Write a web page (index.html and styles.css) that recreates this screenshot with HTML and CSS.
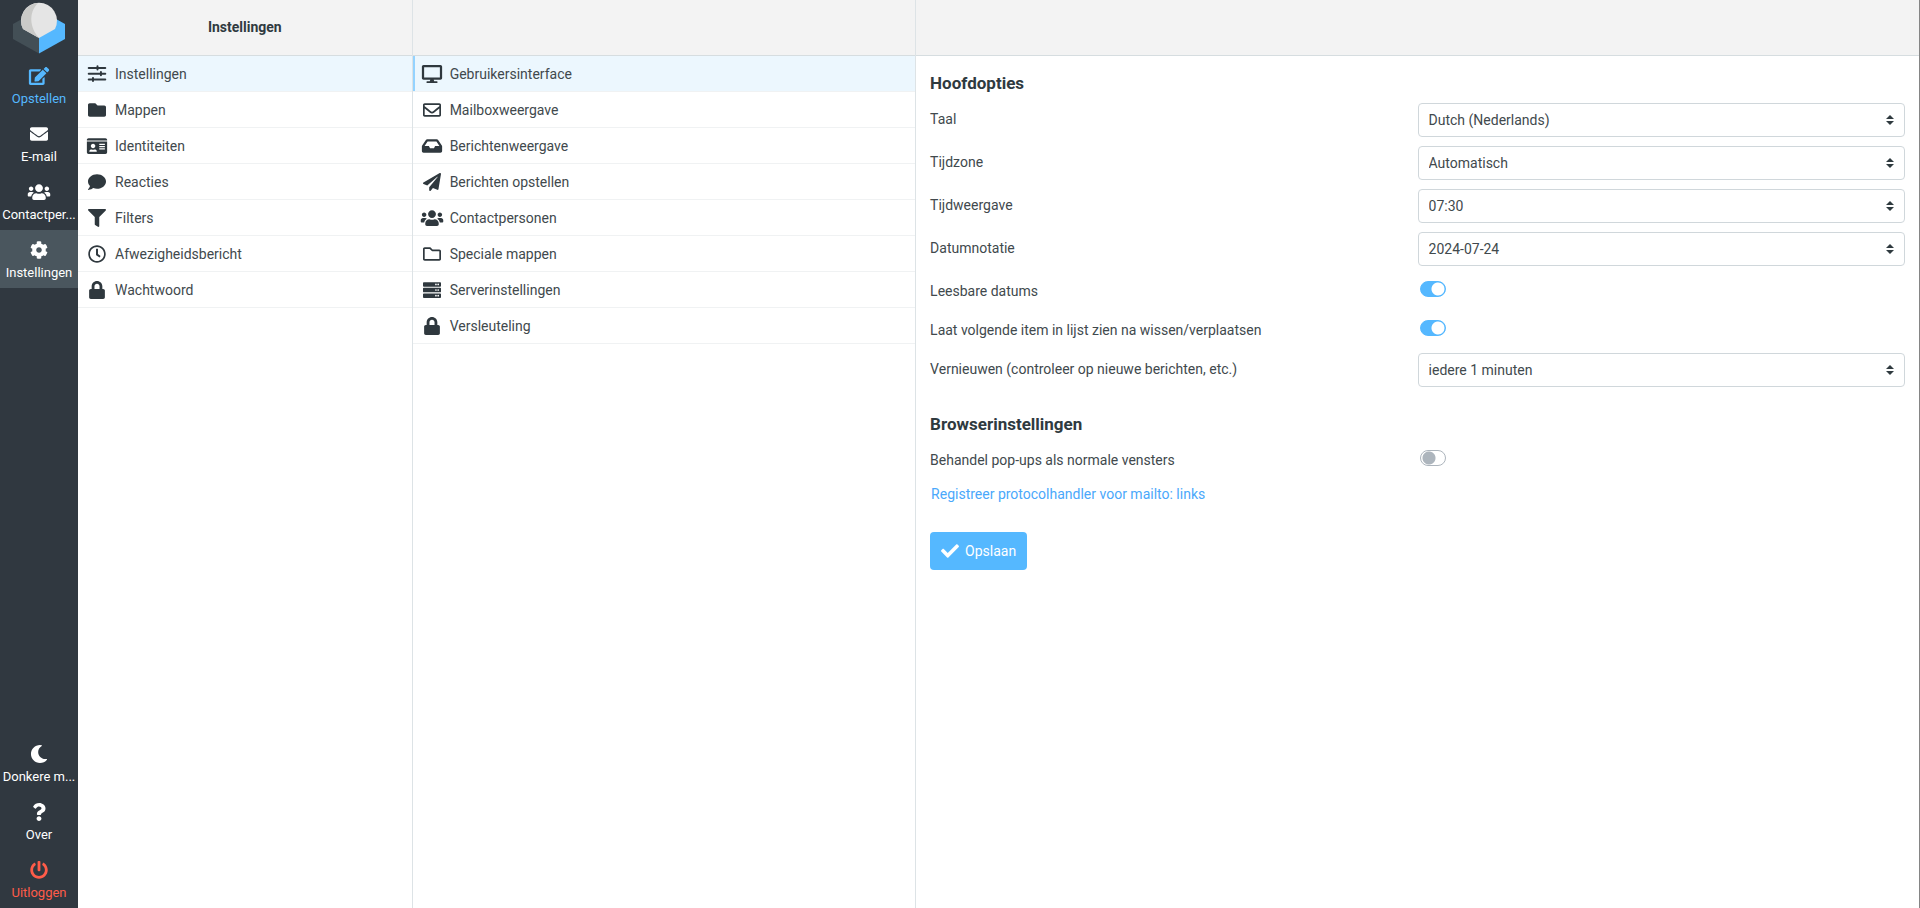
FILE: index.html
```html
<!DOCTYPE html>
<html lang="nl">
<head>
<meta charset="utf-8">
<title>Instellingen</title>
<link rel="stylesheet" href="styles.css">
</head>
<body>
<svg class="sprite" aria-hidden="true">
  <symbol id="edit" viewBox="0 0 576 512"><path d="M402.6 83.2l90.2 90.2c3.8 3.8 3.8 10 0 13.8L274.4 405.6l-92.8 10.3c-12.4 1.4-22.9-9.1-21.5-21.5l10.3-92.8L388.8 83.2c3.8-3.8 10-3.8 13.8 0zm162-22.9l-48.8-48.8c-15.2-15.2-39.9-15.2-55.2 0l-35.4 35.4c-3.8 3.8-3.8 10 0 13.8l90.2 90.2c3.8 3.8 10 3.8 13.8 0l35.4-35.4c15.2-15.3 15.2-40 0-55.2zM384 346.2V448H64V128h229.8c3.2 0 6.2-1.3 8.5-3.5l40-40c7.6-7.6 2.2-20.5-8.5-20.5H48C21.5 64 0 85.5 0 112v352c0 26.5 21.5 48 48 48h352c26.5 0 48-21.5 48-48V306.2c0-10.7-12.9-16-20.5-8.5l-40 40c-2.2 2.3-3.5 5.3-3.5 8.5z"/></symbol>
  <symbol id="envelope" viewBox="0 0 512 512"><path d="M502.3 190.8c3.9-3.1 9.7-.2 9.7 4.7V400c0 26.5-21.5 48-48 48H48c-26.5 0-48-21.5-48-48V195.6c0-5 5.7-7.8 9.7-4.7 22.4 17.4 52.1 39.5 154.1 113.6 21.1 15.4 56.7 47.8 92.2 47.6 35.7.3 72-32.8 92.3-47.6 102-74.1 131.6-96.3 154-113.7zM256 320c23.2.4 56.6-29.2 73.4-41.4 132.7-96.3 142.8-104.7 173.4-128.7 5.8-4.5 9.2-11.5 9.2-18.9v-19c0-26.5-21.5-48-48-48H48c-26.5 0-48 21.5-48 48v19c0 7.4 3.4 14.3 9.2 18.9 30.6 23.9 40.7 32.4 173.4 128.7 16.8 12.2 50.2 41.8 73.4 41.4z"/></symbol>
  <symbol id="users" viewBox="0 0 640 512"><path d="M96 224c35.3 0 64-28.7 64-64s-28.7-64-64-64-64 28.7-64 64 28.7 64 64 64zm448 0c35.3 0 64-28.7 64-64s-28.7-64-64-64-64 28.7-64 64 28.7 64 64 64zm32 32h-64c-17.6 0-33.5 7.1-45.1 18.6 40.3 22.1 68.9 62 75.1 109.4h66c17.7 0 32-14.3 32-32v-32c0-35.3-28.7-64-64-64zm-256 0c61.9 0 112-50.1 112-112S381.9 32 320 32 208 82.1 208 144s50.1 112 112 112zm76.8 32h-8.3c-20.8 10-43.9 16-68.5 16s-47.6-6-68.5-16h-8.3C179.6 288 128 339.6 128 403.2V432c0 26.5 21.5 48 48 48h288c26.5 0 48-21.5 48-48v-28.8c0-63.6-51.6-115.2-115.2-115.2zm-223.7-13.4C161.5 263.1 145.6 256 128 256H64c-35.3 0-64 28.7-64 64v32c0 17.7 14.3 32 32 32h65.9c6.3-47.4 34.9-87.3 75.2-109.4z"/></symbol>
  <symbol id="cog" viewBox="0 0 512 512"><path d="M487.4 315.7l-42.6-24.6c4.3-23.2 4.3-47 0-70.2l42.6-24.6c4.9-2.8 7.1-8.6 5.5-14-11.1-35.6-30-67.8-54.7-94.6-3.8-4.1-10-5.1-14.8-2.3L380.8 110c-17.9-15.4-38.5-27.3-60.8-35.1V25.8c0-5.6-3.9-10.5-9.4-11.7-36.7-8.2-74.3-7.8-109.2 0-5.5 1.2-9.4 6.1-9.4 11.7V75c-22.2 7.9-42.8 19.8-60.8 35.1L88.7 85.5c-4.9-2.8-11-1.9-14.8 2.3-24.7 26.7-43.6 58.9-54.7 94.6-1.7 5.4.6 11.2 5.5 14L67.3 221c-4.3 23.2-4.3 47 0 70.2l-42.6 24.6c-4.9 2.8-7.1 8.6-5.5 14 11.1 35.6 30 67.8 54.7 94.6 3.8 4.1 10 5.1 14.8 2.3l42.6-24.6c17.9 15.4 38.5 27.3 60.8 35.1v49.2c0 5.6 3.9 10.5 9.4 11.7 36.7 8.2 74.3 7.8 109.2 0 5.5-1.2 9.4-6.1 9.4-11.7v-49.2c22.2-7.9 42.8-19.8 60.8-35.1l42.6 24.6c4.9 2.8 11 1.9 14.8-2.3 24.7-26.7 43.6-58.9 54.7-94.6 1.5-5.5-.7-11.3-5.6-14.1zM256 336c-44.1 0-80-35.9-80-80s35.9-80 80-80 80 35.9 80 80-35.9 80-80 80z"/></symbol>
  <symbol id="moon" viewBox="0 0 512 512"><path d="M283.211 512c78.962 0 151.079-35.925 198.857-94.792 7.068-8.708-.639-21.43-11.562-19.35-124.203 23.654-238.262-71.576-238.262-196.954 0-72.222 38.662-138.635 101.498-174.394 9.686-5.512 7.25-20.197-3.756-22.23A258.156 258.156 0 0 0 283.211 0c-141.309 0-256 114.511-256 256 0 141.309 114.511 256 256 256z"/></symbol>
  <symbol id="question" viewBox="0 0 384 512"><path d="M202.021 0C122.202 0 70.503 32.703 29.914 91.026c-7.363 10.58-5.093 25.086 5.178 32.874l43.138 32.709c10.373 7.865 25.132 6.026 33.253-4.148 25.049-31.381 43.63-49.449 82.757-49.449 30.764 0 68.816 19.799 68.816 49.631 0 22.552-18.617 34.134-48.993 51.164-35.423 19.86-82.299 44.576-82.299 106.405V320c0 13.255 10.745 24 24 24h72.471c13.255 0 24-10.745 24-24v-5.773c0-42.86 125.268-44.645 125.268-160.627C377.504 66.256 286.902 0 202.021 0zM192 373.459c-38.196 0-69.271 31.075-69.271 69.271 0 38.195 31.075 69.27 69.271 69.27s69.271-31.075 69.271-69.271-31.075-69.27-69.271-69.27z"/></symbol>
  <symbol id="power" viewBox="0 0 512 512"><path d="M400 54.1c63 45 104 118.6 104 201.9 0 136.8-110.8 247.7-247.5 248C120 504.3 8.2 393 8 256.4 7.9 173.1 48.9 99.3 111.8 54.2c11.7-8.3 28-4.8 35 7.7L162.6 90c5.9 10.5 3.1 23.8-6.6 31-41.5 30.8-68 79.6-68 134.9-.1 92.3 74.5 168.1 168 168.1 91.6 0 168.6-74.2 168-169.1-.3-51.8-24.7-101.8-68.1-134-9.7-7.2-12.4-20.5-6.5-30.9l15.8-28.1c7-12.4 23.2-16.1 34.8-7.8zM296 264V24c0-13.3-10.7-24-24-24h-32c-13.3 0-24 10.7-24 24v240c0 13.3 10.7 24 24 24h32c13.3 0 24-10.7 24-24z"/></symbol>
  <symbol id="sliders" viewBox="0 0 512 512"><path d="M22 54h220V38a28 28 0 0 1 56 0v16h192a30 30 0 0 1 0 60H298v16a28 28 0 0 1-56 0v-16H22a30 30 0 0 1 0-60zM22 218h318v-16a28 28 0 0 1 56 0v16h94a30 30 0 0 1 0 60h-94v16a28 28 0 0 1-56 0v-16H22a30 30 0 0 1 0-60zM22 382h92v-16a28 28 0 0 1 56 0v16h320a30 30 0 0 1 0 60H170v16a28 28 0 0 1-56 0v-16H22a30 30 0 0 1 0-60z"/></symbol>
  <symbol id="folder" viewBox="0 0 512 512"><path d="M464 128H272l-64-64H48C21.49 64 0 85.49 0 112v288c0 26.51 21.49 48 48 48h416c26.51 0 48-21.49 48-48V176c0-26.51-21.49-48-48-48z"/></symbol>
  <symbol id="idcard" viewBox="0 0 576 512"><path fill-rule="evenodd" d="M528 32H48C21.5 32 0 53.5 0 80v16h576V80c0-26.5-21.5-48-48-48zM0 432c0 26.5 21.5 48 48 48h480c26.5 0 48-21.5 48-48V128H0v304zM352 192h160v32H352zM352 256h160v32H352zM352 320h160v32H352zM176 192c35.3 0 64 28.7 64 64s-28.7 64-64 64-64-28.700-64-64 28.700-64 64-64zM67.1 396.2C75.5 370.5 99.6 352 128 352h8.2c12.3 5.1 25.7 8 39.8 8s27.6-2.9 39.8-8h8.2c28.400 0 52.5 18.5 60.9 44.2 3.2 9.9-5.2 19.8-15.6 19.8H82.7c-10.4 0-18.8-10-15.6-19.8z"/></symbol>
  <symbol id="comment" viewBox="0 0 512 512"><path d="M256 32C114.6 32 0 125.1 0 240c0 49.6 21.4 95 57 130.7C44.5 421.1 2.7 466 2.2 466.5c-2.2 2.3-2.8 5.7-1.5 8.7S4.8 480 8 480c66.3 0 116-31.8 140.6-51.4 32.7 12.3 69 19.4 107.4 19.4 141.4 0 256-93.1 256-208S397.4 32 256 32z"/></symbol>
  <symbol id="filter" viewBox="0 0 512 512"><path d="M487.976 0H24.028C2.71 0-8.047 25.866 7.058 40.971L192 225.941V432c0 7.831 3.821 15.17 10.237 19.662l80 55.98C298.02 518.69 320 507.493 320 487.98V225.941l184.947-184.97C520.021 25.896 509.338 0 487.976 0z"/></symbol>
  <symbol id="clock" viewBox="0 0 512 512"><path d="M256 8C119 8 8 119 8 256s111 248 248 248 248-111 248-248S393 8 256 8zm0 448c-110.5 0-200-89.5-200-200S145.5 56 256 56s200 89.5 200 200-89.5 200-200 200zm61.8-104.4l-84.9-61.7c-3.1-2.3-4.9-5.9-4.9-9.7V116c0-6.6 5.4-12 12-12h32c6.6 0 12 5.4 12 12v141.7l66.8 48.6c5.4 3.9 6.5 11.4 2.6 16.8L334.6 349c-3.9 5.3-11.4 6.5-16.8 2.6z"/></symbol>
  <symbol id="lock" viewBox="0 0 448 512"><path d="M400 224h-24v-72C376 68.2 307.8 0 224 0S72 68.2 72 152v72H48c-26.5 0-48 21.5-48 48v192c0 26.5 21.5 48 48 48h352c26.5 0 48-21.5 48-48V272c0-26.5-21.5-48-48-48zm-104 0H152v-72c0-39.7 32.3-72 72-72s72 32.3 72 72v72z"/></symbol>
  <symbol id="desktop" viewBox="0 0 576 512"><path d="M528 0H48C21.5 0 0 21.5 0 48v320c0 26.5 21.5 48 48 48h192l-16 48h-72c-13.3 0-24 10.7-24 24s10.7 24 24 24h272c13.3 0 24-10.7 24-24s-10.7-24-24-24h-72l-16-48h192c26.5 0 48-21.5 48-48V48c0-26.5-21.5-48-48-48zm-16 352H64V64h448v288z"/></symbol>
  <symbol id="envelope-o" viewBox="0 0 512 512"><path d="M464 64H48C21.49 64 0 85.49 0 112v288c0 26.51 21.49 48 48 48h416c26.51 0 48-21.49 48-48V112c0-26.51-21.49-48-48-48zm0 48v40.805c-22.422 18.259-58.168 46.651-134.587 106.49-16.841 13.247-50.201 45.072-73.413 44.701-23.208.375-56.579-31.459-73.413-44.701C106.18 199.465 70.425 171.067 48 152.805V112h416zM48 400V214.398c22.914 18.251 55.409 43.862 104.938 82.646 21.857 17.205 60.134 55.186 103.062 54.955 42.717.231 80.509-37.199 103.053-54.947 49.528-38.783 82.032-64.401 104.947-82.653V400H48z"/></symbol>
  <symbol id="inbox" viewBox="0 0 576 512"><path d="M567.938 243.908L462.25 85.374A48.003 48.003 0 0 0 422.311 64H153.689a48 48 0 0 0-39.938 21.374L8.062 243.908A47.994 47.994 0 0 0 0 270.533V400c0 26.51 21.49 48 48 48h480c26.51 0 48-21.49 48-48V270.533a47.994 47.994 0 0 0-8.062-26.625zM162.252 128h251.497l85.333 128H376l-32 64H232l-32-64H76.918l85.334-128z"/></symbol>
  <symbol id="plane" viewBox="0 0 512 512"><path d="M476 3.2L12.5 270.6c-18.1 10.4-15.8 35.6 2.2 43.2L121 358.4l287.3-253.2c5.5-4.9 13.3 2.6 8.6 8.3L176 407v80.5c0 23.6 28.5 32.9 42.5 15.8L282 426l124.6 52.2c14.2 6 30.4-2.9 33-18.2l72-432C515 7.8 493.3-6.8 476 3.2z"/></symbol>
  <symbol id="folder-o" viewBox="0 0 512 512"><path d="M464 128H272l-54.63-54.63c-6-6-14.14-9.37-22.63-9.37H48C21.49 64 0 85.49 0 112v288c0 26.51 21.49 48 48 48h416c26.51 0 48-21.49 48-48V176c0-26.51-21.49-48-48-48zm0 272H48V112h140.12l54.63 54.63c6 6 14.14 9.37 22.63 9.37H464v224z"/></symbol>
  <symbol id="server" viewBox="0 0 512 512"><path fill-rule="evenodd" d="M24 32h464a24 24 0 0 1 24 24v80a24 24 0 0 1-24 24H24a24 24 0 0 1-24-24V56a24 24 0 0 1 24-24zm0 160h464a24 24 0 0 1 24 24v80a24 24 0 0 1-24 24H24a24 24 0 0 1-24-24v-80a24 24 0 0 1 24-24zm0 160h464a24 24 0 0 1 24 24v80a24 24 0 0 1-24 24H24a24 24 0 0 1-24-24v-80a24 24 0 0 1 24-24zM368 72a24 24 0 1 0 0 48 24 24 0 0 0 0-48zm64 0a24 24 0 1 0 0 48 24 24 0 0 0 0-48zM368 232a24 24 0 1 0 0 48 24 24 0 0 0 0-48zm64 0a24 24 0 1 0 0 48 24 24 0 0 0 0-48zM368 392a24 24 0 1 0 0 48 24 24 0 0 0 0-48zm64 0a24 24 0 1 0 0 48 24 24 0 0 0 0-48z"/></symbol>
  <symbol id="check" viewBox="0 0 512 512"><path d="M173.898 439.404l-166.4-166.4c-9.997-9.997-9.997-26.206 0-36.204l36.203-36.204c9.997-9.998 26.207-9.998 36.204 0L192 312.69 432.095 72.596c9.997-9.997 26.207-9.997 36.204 0l36.203 36.204c9.997 9.997 9.997 26.206 0 36.204l-294.4 294.401c-9.998 9.997-26.207 9.997-36.204-.001z"/></symbol>
</svg>
<div class="layout">
  <nav class="taskbar">
    <svg class="logo" viewBox="0 0 78 56" role="img" aria-label="Logo">
      <path fill="#434f56" d="M13 24l9-5 17 10v24.500L13 39z"/>
      <path fill="#55b8ff" d="M65 24l-9-5-17 10v24.500L65 39z"/>
      <path fill="#e5e5e5" d="M39 38l-16-9a18 18 0 1 1 32 0z"/>
      <path fill="#cacac8" d="M38 3a18 18 0 0 0-15 26l16 9c-9-10-11-25-1-35z"/>
    </svg>
    <a class="task compose" href="#"><svg class="icon"><use href="#edit"/></svg><span>Opstellen</span></a>
    <a class="task" href="#"><svg class="icon"><use href="#envelope"/></svg><span>E-mail</span></a>
    <a class="task" href="#"><svg class="icon"><use href="#users"/></svg><span>Contactper...</span></a>
    <a class="task selected" href="#"><svg class="icon"><use href="#cog"/></svg><span>Instellingen</span></a>
    <div class="spacer"></div>
    <a class="task" href="#"><svg class="icon"><use href="#moon"/></svg><span>Donkere m...</span></a>
    <a class="task" href="#"><svg class="icon"><use href="#question"/></svg><span>Over</span></a>
    <a class="task logout" href="#"><svg class="icon"><use href="#power"/></svg><span>Uitloggen</span></a>
  </nav>
  <section class="column menu">
    <header class="header">Instellingen</header>
    <ul class="list">
      <li class="selected"><a href="#"><svg class="icon"><use href="#sliders"/></svg>Instellingen</a></li>
      <li><a href="#"><svg class="icon"><use href="#folder"/></svg>Mappen</a></li>
      <li><a href="#"><svg class="icon"><use href="#idcard"/></svg>Identiteiten</a></li>
      <li><a href="#"><svg class="icon"><use href="#comment"/></svg>Reacties</a></li>
      <li><a href="#"><svg class="icon"><use href="#filter"/></svg>Filters</a></li>
      <li><a href="#"><svg class="icon"><use href="#clock"/></svg>Afwezigheidsbericht</a></li>
      <li><a href="#"><svg class="icon"><use href="#lock"/></svg>Wachtwoord</a></li>
    </ul>
  </section>
  <section class="column sections">
    <header class="header"></header>
    <ul class="list">
      <li class="selected focused"><a href="#"><svg class="icon"><use href="#desktop"/></svg>Gebruikersinterface</a></li>
      <li><a href="#"><svg class="icon"><use href="#envelope-o"/></svg>Mailboxweergave</a></li>
      <li><a href="#"><svg class="icon"><use href="#inbox"/></svg>Berichtenweergave</a></li>
      <li><a href="#"><svg class="icon"><use href="#plane"/></svg>Berichten opstellen</a></li>
      <li><a href="#"><svg class="icon"><use href="#users"/></svg>Contactpersonen</a></li>
      <li><a href="#"><svg class="icon"><use href="#folder-o"/></svg>Speciale mappen</a></li>
      <li><a href="#"><svg class="icon"><use href="#server"/></svg>Serverinstellingen</a></li>
      <li><a href="#"><svg class="icon"><use href="#lock"/></svg>Versleuteling</a></li>
    </ul>
  </section>
  <main class="column content">
    <header class="header"></header>
    <form class="form">
      <fieldset>
        <legend>Hoofdopties</legend>
        <div class="row"><label for="lang">Taal</label><select id="lang"><option>Dutch (Nederlands)</option></select></div>
        <div class="row"><label for="zone">Tijdzone</label><select id="zone"><option>Automatisch</option></select></div>
        <div class="row"><label for="time">Tijdweergave</label><select id="time"><option>07:30</option></select></div>
        <div class="row"><label for="date">Datumnotatie</label><select id="date"><option>2024-07-24</option></select></div>
        <div class="row switch"><label for="pretty">Leesbare datums</label><input type="checkbox" id="pretty" checked></div>
        <div class="row switch"><label for="next">Laat volgende item in lijst zien na wissen/verplaatsen</label><input type="checkbox" id="next" checked></div>
        <div class="row"><label for="refresh">Vernieuwen (controleer op nieuwe berichten, etc.)</label><select id="refresh"><option>iedere 1 minuten</option></select></div>
      </fieldset>
      <fieldset>
        <legend>Browserinstellingen</legend>
        <div class="row switch"><label for="popups">Behandel pop-ups als normale vensters</label><input type="checkbox" id="popups"></div>
        <a class="link" href="#">Registreer protocolhandler voor mailto: links</a>
      </fieldset>
      <button class="save" type="button"><svg class="icon"><use href="#check"/></svg>Opslaan</button>
    </form>
  </main>
</div>
</body>
</html>
```
FILE: styles.css
```css
* { box-sizing: border-box; }
body {
  margin: 0;
  font: 14px/20px Roboto, sans-serif;
  color: #41494d;
  background: #fff;
}
a { color: inherit; text-decoration: none; }
.sprite { display: none; }
.layout {
  display: flex;
  min-height: 100vh;
  border-right: 1px solid #858585;
}
.icon { height: 18px; width: 24px; fill: currentColor; flex: none; }

.taskbar {
  width: 78px;
  flex: none;
  display: flex;
  flex-direction: column;
  background: #303840;
  color: #fff;
}
.logo { display: block; width: 100%; height: 56px; }
.task {
  display: flex;
  flex-direction: column;
  align-items: center;
  gap: 4px;
  height: 58px;
  padding: 11px 1px 0;
  font-size: 13px;
  white-space: nowrap;
}
.task.selected { background: #4a565e; }
.task.compose { color: #55b8ff; }
.task.logout { color: #ff5c49; }
.spacer { flex: 1; }

.column { min-width: 0; }
.menu { flex: 334; border-right: 1px solid #dde3e6; }
.sections { flex: 503; border-right: 1px solid #dde3e6; }
.content { flex: 1004; }
.header {
  height: 56px;
  line-height: 54px;
  background: #f3f3f3;
  border-bottom: 1px solid #d6dde0;
  text-align: center;
  font-weight: 700;
  color: #2f3a3f;
}
.list { list-style: none; margin: 0; padding: 0; }
.list li { border-bottom: 1px solid #f0f2f3; }
.list li.selected { background: #ecf7fe; }
.list li.focused { box-shadow: inset 2px 0 #94d3ff; }
.list a {
  display: flex;
  align-items: center;
  gap: 6px;
  height: 35px;
  padding: 0 7px;
}
.list .icon { color: #2f383e; }

.form { padding: 16px 14px; }
fieldset { border: 0; margin: 0 0 17px; padding: 0; min-width: 0; }
legend {
  padding: 0;
  margin-bottom: 9px;
  font-size: 17px;
  line-height: 22px;
  font-weight: 700;
  color: #2f3a3f;
}
.row {
  display: grid;
  grid-template-columns: 1fr 1fr;
  height: 43px;
}
.row label { padding-top: 6px; }
.row.switch { height: 39px; }
select {
  appearance: none;
  height: 34px;
  padding: 0 28px 0 10px;
  border: 1px solid #d0d7db;
  border-radius: 4px;
  font: inherit;
  color: inherit;
  background: #fff url("data:image/svg+xml,%3Csvg xmlns='http://www.w3.org/2000/svg' viewBox='0 0 4 5'%3E%3Cpath fill='%232f3a3f' d='M2 0L0 2h4zm0 5L0 3h4z'/%3E%3C/svg%3E") no-repeat right 10px center / 8px 10px;
}
input[type="checkbox"] {
  appearance: none;
  width: 26px;
  height: 16px;
  margin: 6px 2px;
  border: 1px solid #adb5bd;
  border-radius: 8px;
  background: radial-gradient(circle at 8px 7px, #adb5bd 6px, #fff 7px);
}
input[type="checkbox"]:checked {
  border-color: #55b8ff;
  background: radial-gradient(circle at 17px 7px, #fff 6px, #55b8ff 7px);
}
.link { display: block; padding: 1px; color: #4aa8fb; }
.save {
  display: flex;
  align-items: center;
  gap: 3px;
  height: 38px;
  margin-top: 27px;
  padding: 0 11px 0 8px;
  border: 0;
  border-radius: 4px;
  background: #55b8ff;
  color: #fff;
  font: inherit;
}
```
